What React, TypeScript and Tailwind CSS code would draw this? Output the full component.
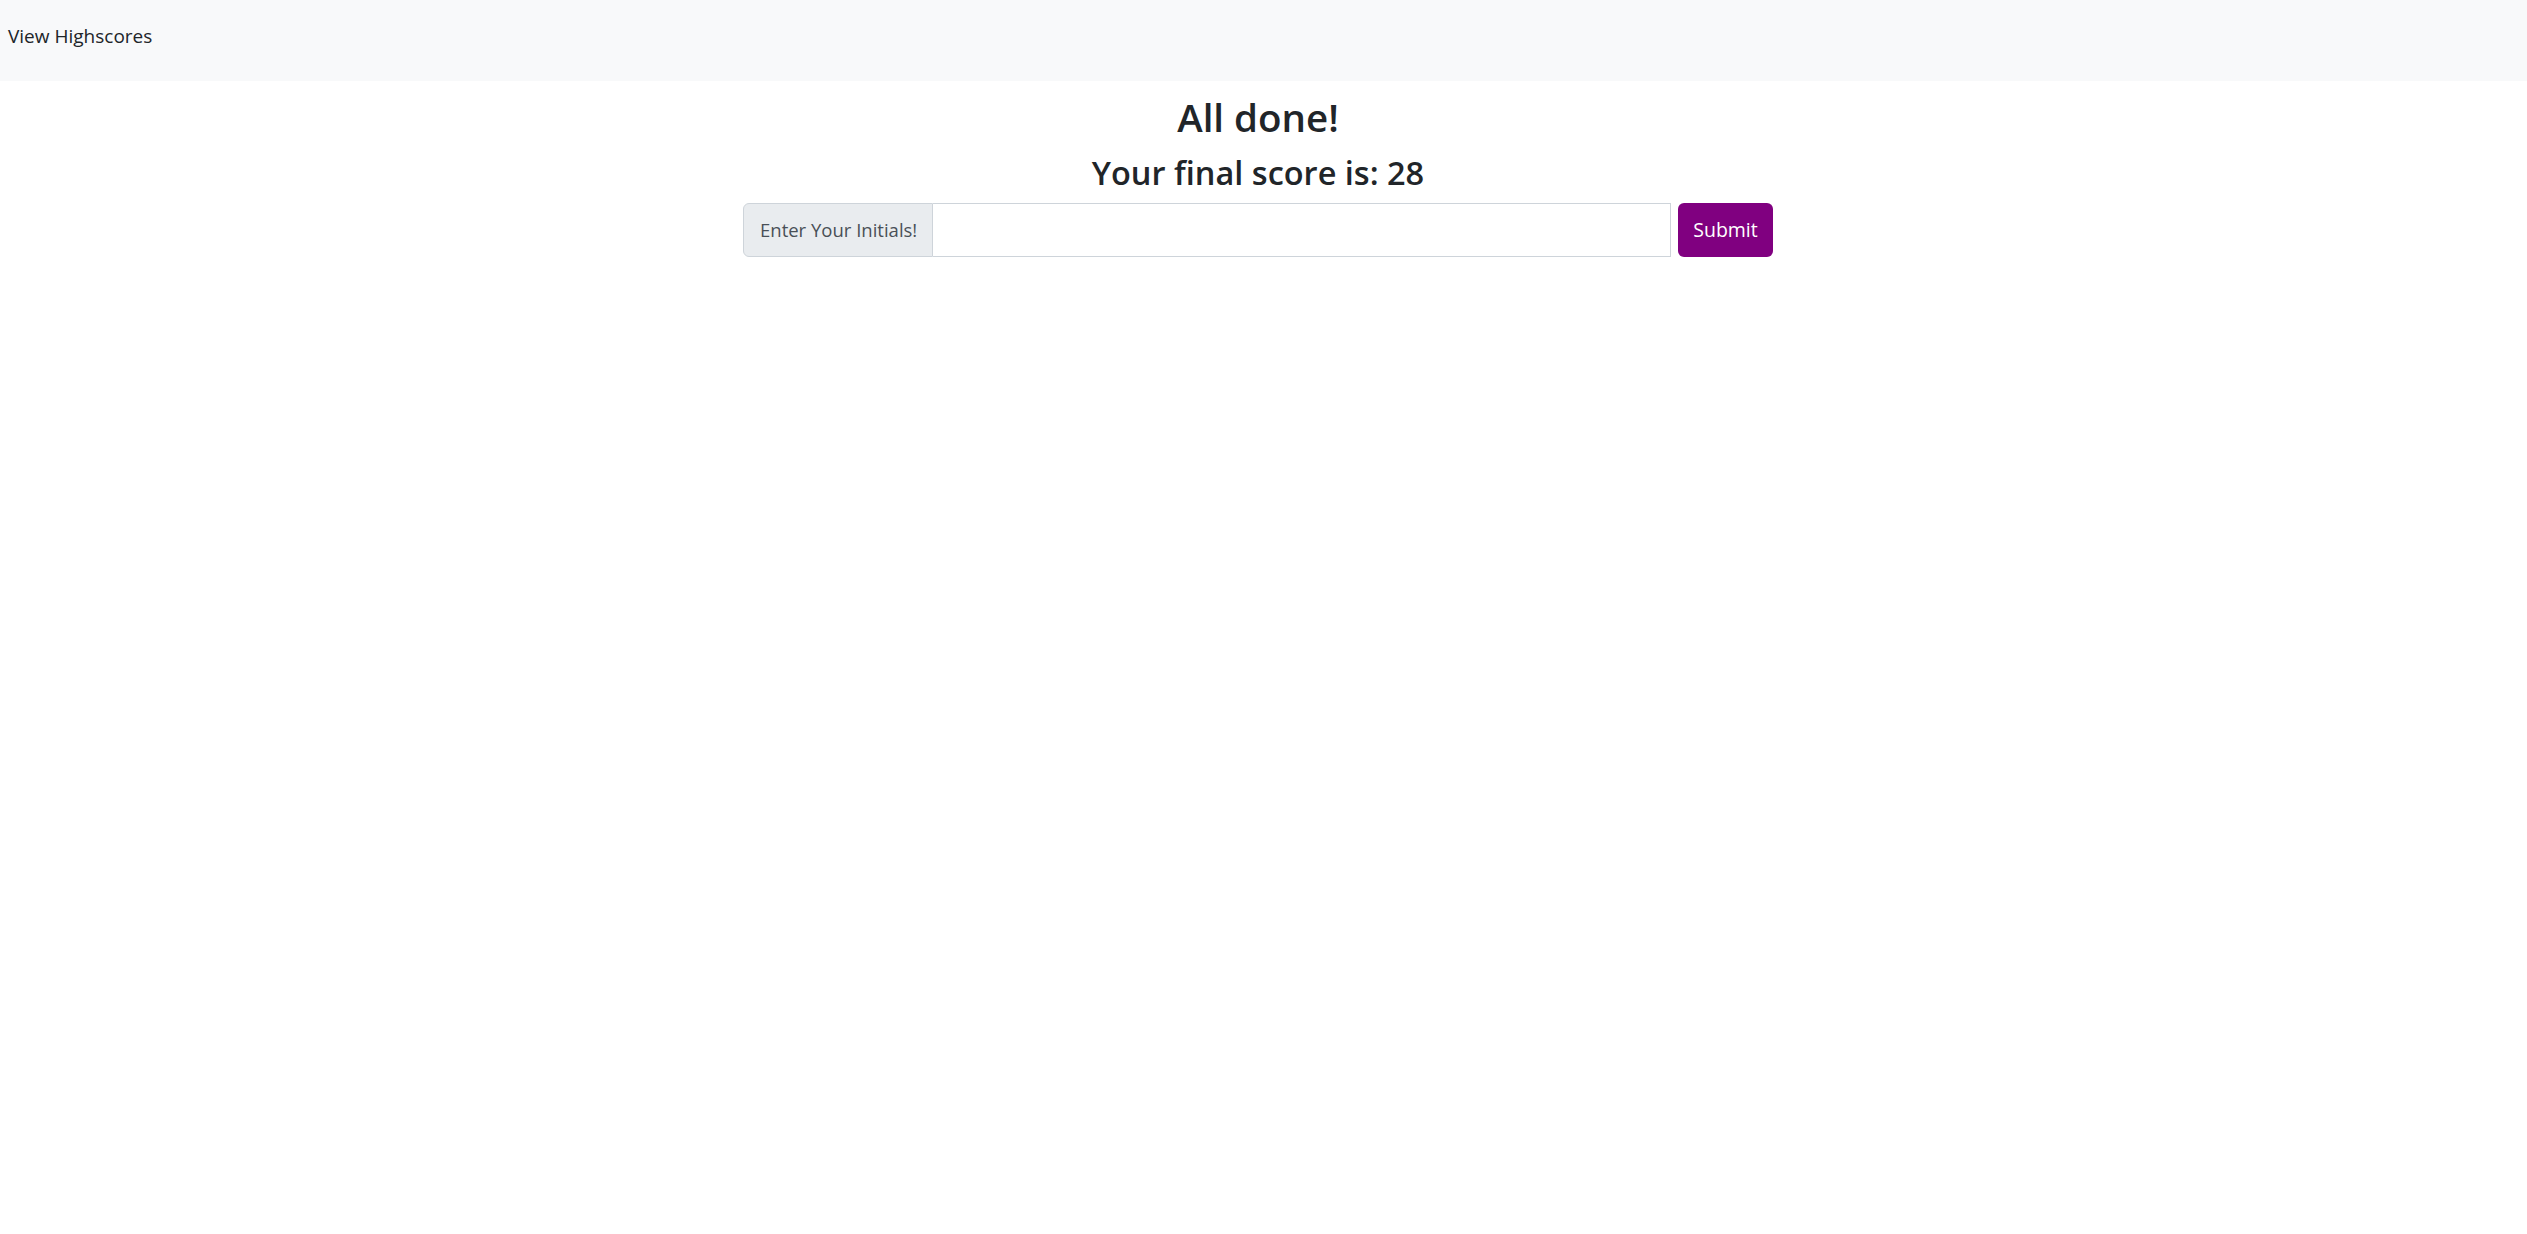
import React from 'react';

const App: React.FC = () => {
  return (
    <div className="min-h-screen bg-white text-[#212529] font-['Open_Sans',_'Liberation_Sans',_sans-serif]">
      <nav className="h-[81px] bg-[#f8f9fa] flex items-center px-2 pb-[9px]">
        <a className="text-[19px] leading-none text-[#212529] cursor-pointer">View Highscores</a>
      </nav>

      <div className="flex flex-col items-center pr-[11px]">
        <h1 className="mt-[12px] text-[38.5px] leading-[48px] font-semibold">All done!</h1>
        <h2 className="mt-[12px] text-[32.5px] leading-[40px] font-semibold">Your final score is: 28</h2>

        <div className="mt-[10px] flex items-stretch w-[1030px] h-[54px]">
          <span className="flex items-center px-[16px] bg-[#e9ecef] border border-[#ced4da] rounded-l-[6px] text-[18.5px] text-[#495057] whitespace-nowrap w-[190px]">
            Enter Your Initials!
          </span>
          <input
            type="text"
            className="flex-1 border border-l-0 border-[#ced4da] outline-none px-3 text-[20px]"
          />
          <button className="ml-[7px] w-[95px] rounded-[6px] bg-[#800080] text-white text-[19.5px]">
            Submit
          </button>
        </div>
      </div>
    </div>
  );
};

export default App;
